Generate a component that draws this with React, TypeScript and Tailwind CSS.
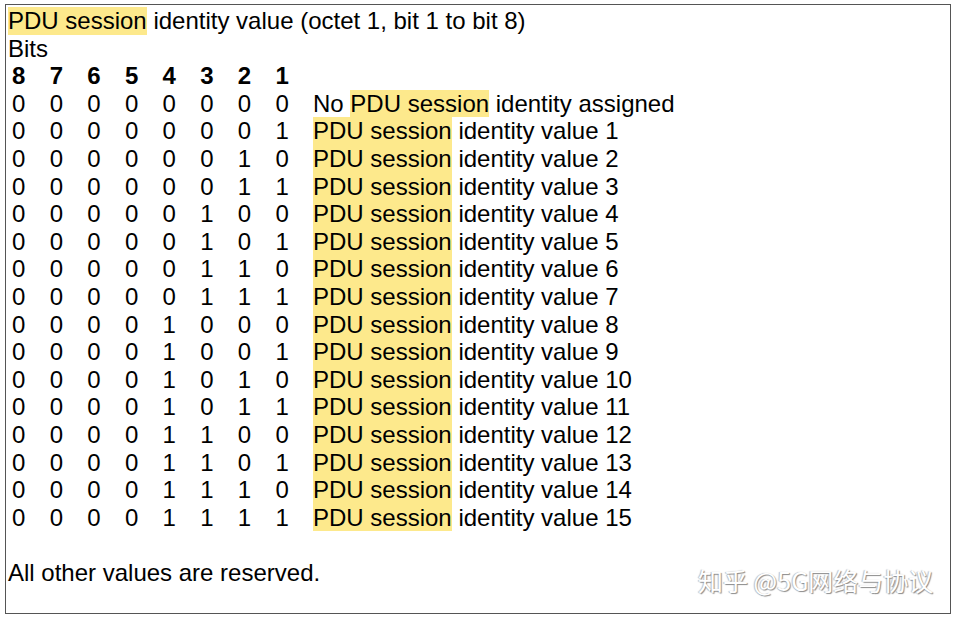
const ROWS = Array.from({ length: 16 }, (_, i) => i)

function bitsOf(n: number) {
  return [7, 6, 5, 4, 3, 2, 1, 0].map((b) => (n >> b) & 1)
}

function Hl({ children }: { children: React.ReactNode }) {
  return <span className="inline-block bg-[#fde98c]">{children}</span>
}

export default function App() {
  return (
    <div className="min-h-[617px] w-[955px] bg-white pl-[5px] pt-[4px] font-['Liberation_Sans',Arial,sans-serif] text-[24px] leading-[27.6px] text-black">
      <div className="relative h-[610px] w-[946px] border border-[#555] pl-[2px] pt-[2px]">
        <div>
          <Hl>PDU session</Hl> identity value (octet 1, bit 1 to bit 8)
        </div>
        <div>Bits</div>
        <div className="grid grid-cols-[repeat(8,37.625px)_1fr] pl-[4px]">
          {[8, 7, 6, 5, 4, 3, 2, 1].map((d) => (
            <div key={d} className="font-bold">
              {d}
            </div>
          ))}
          <div />
          {ROWS.map((n) => (
            <Row key={n} n={n} />
          ))}
        </div>
        <div>&nbsp;</div>
        <div>All other values are reserved.</div>

        <div className="absolute left-[692px] top-[558px] font-['Noto_Sans_CJK_SC',sans-serif] text-[25px] leading-[34px] text-white [text-shadow:1px_1px_1px_#8a8a8a,-1px_0_1px_#bbb]">
          知乎 @5G网络与协议
        </div>
      </div>
    </div>
  )
}

function Row({ n }: { n: number }) {
  return (
    <>
      {bitsOf(n).map((b, i) => (
        <div key={i}>{b}</div>
      ))}
      <div className="whitespace-nowrap">
        {n === 0 ? (
          <>
            No <Hl>PDU session</Hl> identity assigned
          </>
        ) : (
          <>
            <Hl>PDU session</Hl> identity value {n}
          </>
        )}
      </div>
    </>
  )
}
